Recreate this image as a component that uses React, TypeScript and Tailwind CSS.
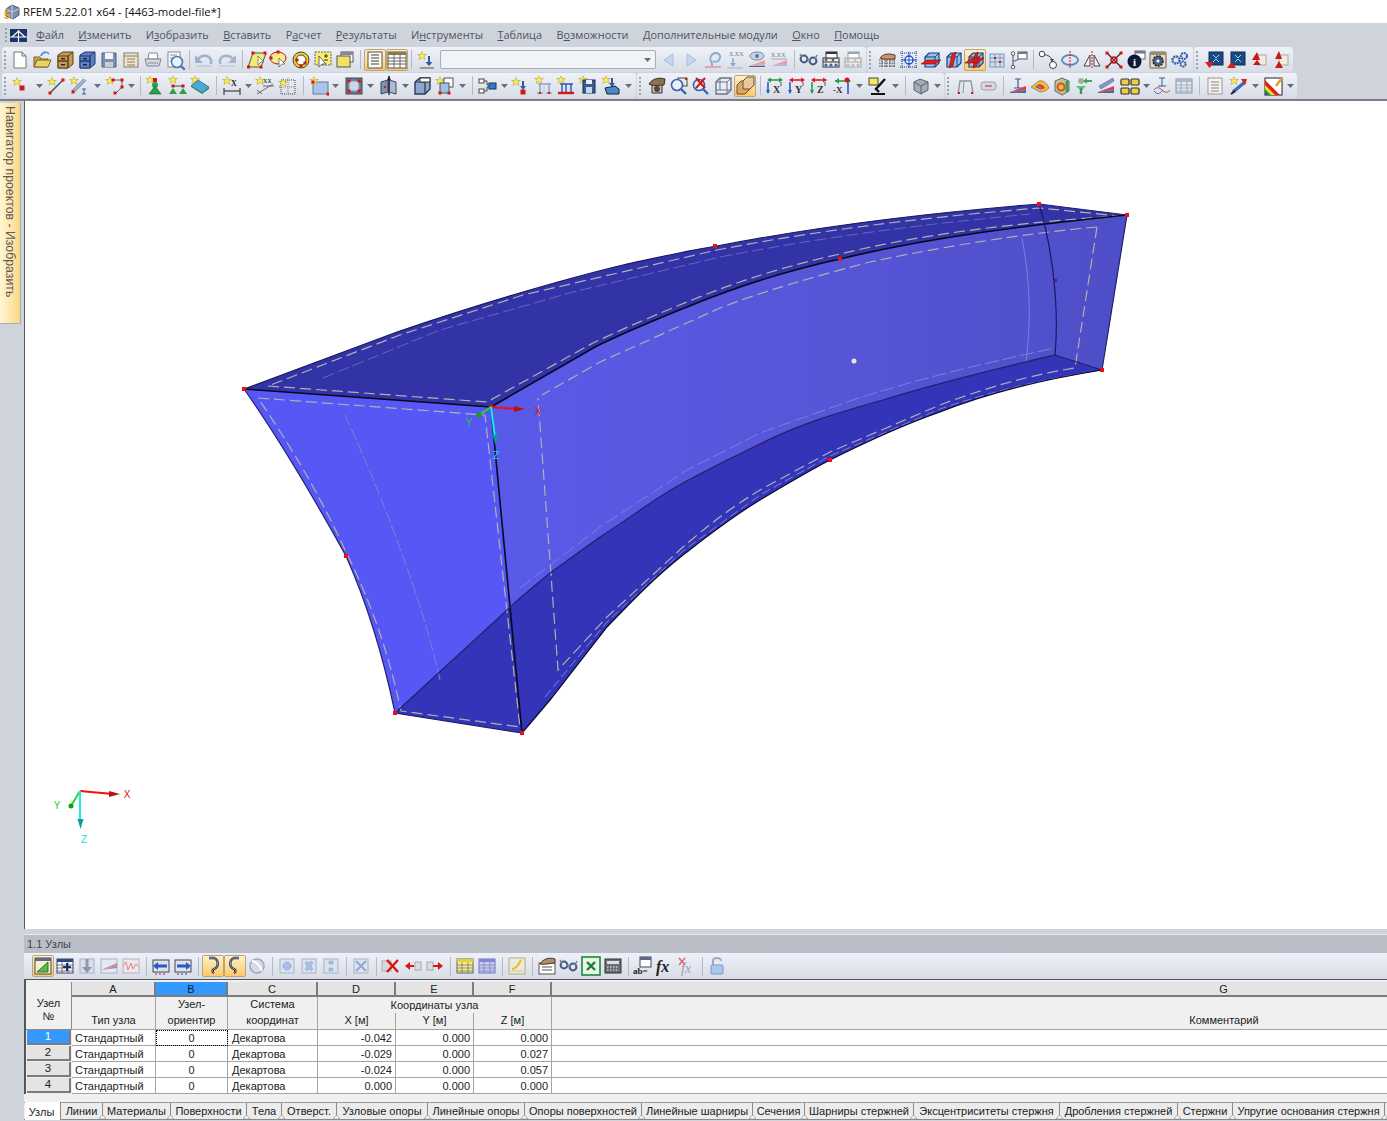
import type { ReactNode } from 'react'

// small pieces the toolbar icons are built from
const Star = ({ x = 5, y = 5 }: { x?: number; y?: number }) => (
  <path transform={`translate(${x} ${y})`} d="M0-4.5 1.2-1.4 4.4-1.6 2-.2 3 3.4 0 1.4-3 3.4-2-.2-4.4-1.6-1.2-1.4Z" fill="#fff04a" stroke="#a89a3a" strokeWidth=".5" />
)
const Node = ({ x, y, s = 3 }: { x: number; y: number; s?: number }) => <rect x={x - s / 2} y={y - s / 2} width={s} height={s} fill="#d81414" />
const Tx = ({ x, y, s = 6, c = '#444', t }: { x: number; y: number; s?: number; c?: string; t: string }) => (
  <text x={x} y={y} fontSize={s} fill={c} fontFamily="Liberation Serif, serif" fontWeight="700">{t}</text>
)
const P = ({ d, f = 'none', c = '#555', w = 1 }: { d: string; f?: string; c?: string; w?: number }) => <path d={d} fill={f} stroke={c} strokeWidth={w} />
const Mag = ({ x = 8, y = 8, c = '#4a78b8' }: { x?: number; y?: number; c?: string }) => (
  <g>
    <circle cx={x} cy={y} r="5.5" fill="#e8f0fa" stroke={c} strokeWidth="1.6" />
    <path d={`M${x + 4} ${y + 4}l5 5`} stroke={c} strokeWidth="2.4" />
  </g>
)
const Cab = ({ a, b }: { a: string; b: string }) => (
  <g>
    <P d="M3 5 8 2h10v12l-5 4H3Z" f={a} c={b} />
    <P d="M3 6h10v5H3ZM3 11h10v7H3Z" f={a} c={b} />
    <P d="M13 6l5-4M13 18V6" c={b} />
    <rect x="6" y="8" width="4" height="1.4" fill="#222" />
    <rect x="6" y="14" width="4" height="1.4" fill="#222" />
  </g>
)
const Abacus = ({ c, n }: { c: string; n: string }) => (
  <g>
    <rect x="2" y="8" width="16" height="9" fill="#f4f0d8" stroke={c} />
    <rect x="5" y="2" width="11" height="6" fill="#fff" stroke={c} />
    <rect x="5" y="2" width="11" height="2" fill={c} />
    <path d="M2 12h16" stroke={c} />
    <circle cx="5" cy="15" r="1.6" fill={n} /><circle cx="10" cy="15" r="1.6" fill={n} /><circle cx="15" cy="15" r="1.6" fill={n} />
    <circle cx="5" cy="10" r="1.4" fill={n} /><circle cx="12" cy="10" r="1.4" fill={n} />
  </g>
)
const Plane = ({ a }: { a: string }) => (
  <g>
    <P d="M4 7l4-4h10v10l-4 4H4Z" f="#92c2f0" c="#1c3f7c" w={1.2} />
    <P d="M4 7h10v10M14 7l4-4" c="#1c3f7c" />
    <P d={a} f="#e02020" c="#801010" w={.6} />
  </g>
)
const Wedge = ({ pale = false }: { pale?: boolean }) => (
  <g>
    <path d="M2 16 18 10v4Z" fill={pale ? '#e8a0a0' : '#e04040'} />
    <path d="M2 16 18 14v2Z" fill={pale ? '#a0b8e8' : '#3a6ad0'} />
    <path d="M2 16.5h16" stroke="#666" />
  </g>
)
const Ax = ({ t, a, b }: { t: string; a: string; b: string }) => (
  <g>
    <path d="M3 6v11" stroke={b} strokeWidth="1.6" />
    <path d="M1 14l2 4 2-4Z" fill={b} />
    <path d="M3 4h14" stroke={a} strokeWidth="1.6" />
    <path d="M14 1.5 18 4l-4 2.5ZM6 1.5 2 4l4 2.5Z" fill={a} />
    <path d="M16 6v4" stroke="#555" />
    <Tx x={8} y={17} s={10} c="#333" t={t} />
  </g>
)
const Tbl = ({ c, b, f = '#fff' }: { c: string; b: string; f?: string }) => (
  <g>
    <rect x="2" y="3" width="16" height="14" fill={f} stroke={c} />
    <rect x="2" y="3" width="16" height="3" fill={b} />
    <path d="M2 9h16M2 12h16M2 15h16M7 6v11M13 6v11" stroke={c} strokeWidth=".7" />
  </g>
)
const Curl = ({ flip = false }: { flip?: boolean }) => (
  <g transform={flip ? 'matrix(-1 0 0 1 20 0)' : undefined}>
    <P d="M6 2h5c5 2 5 9 0 11 -2 1-2 3 0 4" c="#223" w={2.4} />
    <P d="M6 2h5c5 2 5 9 0 11 -2 1-2 3 0 4" c="#8fb0d8" w={1} />
  </g>
)
const Pale = ({ d }: { d: string }) => (
  <g>
    <rect x="3" y="3" width="14" height="14" fill="#dde3ee" stroke="#a8b2c6" />
    <path d={d} fill="#a6c0e8" stroke="#8ea8d0" strokeWidth=".6" />
  </g>
)

const ICONS: Record<string, ReactNode> = {
  doc: <P d="M4 2h8l4 4v12H4ZM12 2v4h4" f="#fff" c="#777" />,
  open: <g><P d="M2 7h6l1 2h7v8H2Z" f="#c8a848" c="#7a6420" /><P d="M5 10h14l-3 7H2Z" f="#ecd068" c="#7a6420" /><P d="M9 6c1-4 6-5 8-2" c="#5a8ac8" w={1.6} /></g>,
  cabB: <Cab a="#c89a58" b="#5a3e18" />,
  cabU: <Cab a="#5a80c8" b="#22386a" />,
  save: <g><P d="M3 3h14v14H3Z" f="#7f8fb4" c="#50607e" /><rect x="6" y="3" width="8" height="6" fill="#f4f4f4" /><rect x="6" y="12" width="8" height="5" fill="#c8ccd6" /></g>,
  notes: <g><rect x="3" y="3" width="14" height="14" fill="#efe4cc" stroke="#8a7c60" /><path d="M3 6h14M6 9h8M6 12h8M6 15h8" stroke="#8a7c60" /></g>,
  print: <g><P d="M6 3h8l1 6H5Z" f="#fff" c="#888" /><P d="M2 9h16l-2 7H4Z" f="#d4d8e0" c="#7e8694" /><path d="M5 13h10" stroke="#8890a0" /></g>,
  prev: <g><rect x="3" y="2" width="12" height="15" fill="#fff" stroke="#888" /><path d="M5 5h7M5 8h4M5 11h3" stroke="#889" /><Mag x={12} y={12} /></g>,
  undo: <g><P d="M4 9c4-5 11-4 13 1v4" c="#9cb0d0" w={2.6} /><path d="M1 5v8h8Z" fill="#9cb0d0" /><path d="M2 16h16" stroke="#b0bccf" /></g>,
  redo: <g><P d="M16 9c-4-5-11-4-13 1v4" c="#a6b4cc" w={2.6} /><path d="M19 5v8h-8Z" fill="#a6b4cc" /><path d="M2 16h16" stroke="#b8c2d2" /></g>,
  para: <g><P d="M6 3h13l-5 14H1Z" f="#f4ec70" c="#555" /><Node x={6} y={3} /><Node x={1.5} y={17} /><Node x={14} y={17} /><Node x={18} y={3} /><P d="M11 6v9l3-3 3 0Z" f="#fff" c="#555" w={.7} /></g>,
  zoomc: <g><ellipse cx="9" cy="8" rx="8" ry="6" fill="#f6ec8c" stroke="#a02020" /><Node x={2} y={8} /><Node x={9} y={2} /><P d="M10 8v9l3-3h3Z" f="#fff" c="#555" w={.7} /></g>,
  ring: <g><circle cx="10" cy="10" r="8" fill="#f0d020" stroke="#444" /><circle cx="10" cy="10" r="5" fill="#fff" stroke="#444" /><Node x={6} y={10} /><Node x={10} y={16} /><Node x={14} y={13} /></g>,
  boxcur: <g><rect x="2" y="2" width="16" height="13" fill="#f6ec70" stroke="#666" strokeDasharray="2 1" /><path d="M11 6h4M13 4v4M11 10h4" stroke="#333" /><P d="M6 6v11l3-3h4Z" f="#fff" c="#444" w={.8} /></g>,
  wins: <g><rect x="6" y="2" width="12" height="10" fill="#fff" stroke="#555" /><rect x="6" y="2" width="12" height="3" fill="#889" /><rect x="2" y="6" width="13" height="11" fill="#f6e060" stroke="#555" /></g>,
  list: <g><rect x="3" y="2" width="14" height="16" fill="#fbfaf2" stroke="#555" /><path d="M6 5h8M6 8h8M6 11h8M6 14h8" stroke="#444" /></g>,
  grid: <g><rect x="1" y="2" width="18" height="16" fill="#fff" stroke="#555" /><rect x="1" y="2" width="18" height="3" fill="#8a7a50" /><path d="M1 8h18M1 11h18M1 14h18M7 5v13M13 5v13" stroke="#666" /></g>,
  starDown: <g><Star x={6} y={6} /><path d="M13 6v8" stroke="#2a5aa8" strokeWidth="2" /><path d="M9.5 12h7L13 16Z" fill="#2a5aa8" /><path d="M4 18h14" stroke="#555" /></g>,
  navL: <path d="M14 4v12L5 10Z" fill="#c8d6f0" stroke="#a8bce0" />,
  navR: <path d="M6 4v12l9-6Z" fill="#c8d6f0" stroke="#a8bce0" />,
  pin: <g><P d="M9 13c-4-5 0-10 4-10s6 5 2 8c-2 1-4 1-5 0" c="#8eaad4" w={1.8} /><path d="M9 13v3" stroke="#8eaad4" strokeWidth="2" /><path d="M2 17h16" stroke="#e09090" strokeWidth="1.4" /></g>,
  xxDown: <g><Tx x={4} y={6} s={6} c="#8a94a6" t="X.XX" /><path d="M8 8v8" stroke="#8eaad4" strokeWidth="1.6" /><path d="M5 13l3 4 3-4Z" fill="#8eaad4" /><path d="M2 18h16" stroke="#a8b0c0" /></g>,
  eye: <g><ellipse cx="10" cy="6" rx="7" ry="4" fill="#c8d4e8" stroke="#7a8aa6" /><circle cx="10" cy="6" r="2" fill="#5a7ab0" /><Wedge pale /></g>,
  xxLine: <g><Tx x={2} y={7} s={6} c="#8a94a6" t="X.XX" /><path d="M2 16 18 10v4Z" fill="#e8a0a0" /><path d="M2 16 18 14v2Z" fill="#a0b8e8" /><path d="M2 9h16" stroke="#a0a8b6" /></g>,
  chain: <g><circle cx="5" cy="9" r="3.4" fill="none" stroke="#445a78" strokeWidth="2" /><circle cx="14" cy="11" r="3.4" fill="none" stroke="#445a78" strokeWidth="2" /><path d="M8 9l3 1M1 4l2 3M18 5l-2 4" stroke="#6a8ab0" strokeWidth="1.6" /></g>,
  abacus: <Abacus c="#333" n="#3a66b8" />,
  abacusP: <Abacus c="#9aa4b8" n="#b8bccc" />,
  handGrid: <g><path d="M2 10h16M2 13h16M2 16h16M5 8v10M9 8v10M13 8v10M17 8v10" stroke="#444" strokeDasharray="1.5 1" /><P d="M3 8c3-4 8-5 15-3v4c-5 0-10 1-15-1Z" f="#c4946c" c="#5a3c20" /></g>,
  crossGrid: <g><path d="M1 3h18M1 17h18M3 1v18M17 1v18" stroke="#2a3a6a" strokeDasharray="1 1" /><circle cx="10" cy="10" r="4" fill="#fff" stroke="#1a4ac8" strokeWidth="1.4" /><path d="M10 2v16M2 10h16" stroke="#1a4ac8" /></g>,
  planeA: <Plane a="M0 14l6-4h14l-6 4Z" />,
  planeB: <Plane a="M6 18l3-14 4-2-3 14Z" />,
  planeC: <Plane a="M0 13l7-5h12l-6 5ZM8 18l2-14 3-2-1 14Z" />,
  gridN: <g><rect x="3" y="4" width="14" height="13" fill="#d4e0f0" stroke="#7a96bc" /><path d="M3 8h14M3 12h14M8 4v13M13 4v13" stroke="#7a96bc" /><Node x={8} y={8} s={2} /><Node x={13} y={12} s={2} /></g>,
  branch: <g><rect x="9" y="2" width="9" height="7" fill="#fff" stroke="#555" /><rect x="9" y="2" width="9" height="2" fill="#778" /><path d="M4 4v13M4 11c4 0 5-2 6-2" stroke="#6a7a98" strokeWidth="1.4" fill="none" /><circle cx="4" cy="3.5" r="1.8" fill="#fff" stroke="#555" /><circle cx="4" cy="17" r="1.8" fill="#fff" stroke="#555" /></g>,
  circles: <g><circle cx="4" cy="4" r="2.8" fill="#fff" stroke="#444" /><circle cx="15" cy="15" r="3.5" fill="#fff" stroke="#444" /><path d="M7 5c4 0 7 3 7 6" stroke="#444" fill="none" /><path d="M12 9l2 3 2-3Z" fill="#444" /></g>,
  rot: <g><ellipse cx="10" cy="10" rx="8" ry="5" fill="none" stroke="#5a84c0" strokeWidth="1.8" /><path d="M10 1v18" stroke="#d81414" strokeDasharray="2 1" /></g>,
  mirror: <g><P d="M8 5v11H2Z" f="#f2f2f2" c="#444" /><P d="M12 5v11h6Z" f="#f2f2f2" c="#444" /><path d="M10 1v18" stroke="#d81414" strokeDasharray="2 1" /></g>,
  redX: <g><path d="M3 3l14 14M17 3 3 17" stroke="#222" strokeWidth="1.2" /><circle cx="10" cy="10" r="3" fill="none" stroke="#c81010" strokeWidth="1.4" /><Node x={3} y={3} /><Node x={17} y={3} /><Node x={3} y={17} /><Node x={17} y={17} /><Node x={10} y={10} s={2} /></g>,
  info: <g><rect x="9" y="1" width="10" height="8" fill="#fff" stroke="#666" /><rect x="9" y="1" width="10" height="2.5" fill="#778" /><circle cx="8.5" cy="11.5" r="7" fill="#0c1a3a" /><text x="7" y="16" fontSize="11" fontWeight="700" fill="#fff" fontFamily="Liberation Serif, serif">i</text></g>,
  gear: <g><rect x="2" y="2" width="16" height="16" rx="1" fill="#e8dcc0" stroke="#6a6048" /><rect x="2" y="2" width="16" height="3" fill="#998c70" /><circle cx="10" cy="11" r="5" fill="#4a6088" stroke="#222" strokeDasharray="2 1" strokeWidth="1.5" /><circle cx="10" cy="11" r="1.6" fill="#fff" /></g>,
  gears: <g><circle cx="6" cy="10" r="3.5" fill="none" stroke="#3a64a8" strokeWidth="2.4" strokeDasharray="2 .7" /><circle cx="14" cy="6" r="3" fill="none" stroke="#3a64a8" strokeWidth="2.2" strokeDasharray="2 .7" /><circle cx="13" cy="14" r="2.6" fill="none" stroke="#3a64a8" strokeWidth="2" strokeDasharray="2 .7" /></g>,
  boxDn: <g><rect x="5" y="2" width="14" height="13" fill="#1a4a84" stroke="#0c2a52" /><path d="M9 5l3 3 3-3M9 12l3-3 3 3" stroke="#a8d0f0" fill="none" /><path d="M1 12h9l-4.5 6Z" fill="#d81c1c" /></g>,
  boxUp: <g><rect x="5" y="2" width="14" height="13" fill="#1a4a84" stroke="#0c2a52" /><path d="M9 5l3 3 3-3M9 12l3-3 3 3" stroke="#a8d0f0" fill="none" /><path d="M1 18h9L5.5 12Z" fill="#d81c1c" /></g>,
  triA: <g><rect x="9" y="5" width="9" height="10" fill="#f0ece0" stroke="#aaa" /><path d="M9 2 4 10h8ZM9 10l-4 5h8Z" fill="#c81818" /></g>,
  triB: <g><rect x="9" y="5" width="9" height="10" fill="#f0ece0" stroke="#aaa" /><path d="M9 1 5 9h7ZM5 18h8l-4-7Z" fill="#c81818" /></g>,
  dot: <g><Star x={7} y={6} /><Node x={12} y={12} s={5} /></g>,
  line: <g><Star x={6} y={6} /><path d="M4 17 17 4" stroke="#444" strokeWidth="1.2" /><Node x={4} y={17} /><Node x={17} y={4} /></g>,
  lineI: <g><Star x={5} y={5} /><path d="M3 15 15 3M5 16 17 4" stroke="#8a9ab4" strokeWidth="1.6" /><Node x={4} y={16} /><path d="M13 13h4M15 13v5M13 18h4" stroke="#3a64a8" /></g>,
  poly: <g><Star x={5} y={5} /><path d="M8 4h9v7l-6 6" stroke="#666" fill="none" /><Node x={8} y={4} /><Node x={17} y={4} /><Node x={17} y={11} /><Node x={10} y={17} /></g>,
  supP: <g><Star x={5} y={4} /><Node x={10} y={4} s={4} /><circle cx="10" cy="9" r="3" fill="#2aa04a" /><P d="M10 10 4 18h12Z" f="#2aa04a" c="#14602a" w={.6} /></g>,
  supL: <g><Star x={5} y={4} /><Node x={5} y={10} /><Node x={15} y={10} /><path d="M5 10h10" stroke="#444" /><path d="M5 12 1 18h8ZM15 12l-4 6h8Z" fill="#2aa04a" /></g>,
  supS: <g><Star x={5} y={4} /><path d="M1 10 8 4l11 7-7 6Z" fill="#4aa8d8" stroke="#335" strokeWidth=".6" /><path d="M1 10l11 7 7-6v2l-7 5-11-7Z" fill="#2a9a4a" /></g>,
  dimX: <g><Star x={5} y={5} /><path d="M2 12v7M18 12v7M2 15h16" stroke="#222" /><Tx x={9} y={10} s={8} c="#222" t="X" /></g>,
  dimXX: <g><Star x={5} y={5} /><path d="M2 18 18 8" stroke="#666" /><path d="M2 14l5 4" stroke="#666" /><Tx x={8} y={7} s={6} c="#444" t="XX" /><path d="M8 10h11" stroke="#666" /></g>,
  dotBox: <g><rect x="4" y="4" width="14" height="14" fill="none" stroke="#444" strokeDasharray="1 1" /><Star x={6} y={7} /><path d="M11 2v16M2 11h16" stroke="#888" strokeDasharray="1 1" /></g>,
  surf: <g><rect x="4" y="6" width="15" height="12" fill="#a8c4e8" stroke="#6a7a98" /><Star x={5} y={5} /><Node x={4} y={6} /><Node x={19} y={18} /></g>,
  frame: <g><rect x="2" y="2" width="16" height="16" fill="#6a7a94" stroke="#444" /><rect x="5" y="5" width="10" height="10" fill="#c8d8ec" stroke="#8090a8" /><Node x={5} y={5} /><Node x={15} y={5} /><Node x={5} y={15} /><Node x={15} y={15} /></g>,
  planes: <g><P d="M2 6l7-2v12l-7 2Z" f="#7a94b8" c="#445" /><P d="M10 4l7 2v12l-7-2Z" f="#a8bcd8" c="#445" /><path d="M10 0v19" stroke="#223" strokeWidth="1.4" /><path d="M8 4l2-4 2 4Z" fill="#223" /><Node x={6} y={11} s={2} /></g>,
  cube: <g><P d="M3 6l5-4h10v11l-5 5H3Z" f="#8ea8cc" c="#2a3a5c" w={1.4} /><P d="M3 6h10v12" c="#2a3a5c" w={1.2} /><P d="M8 2h10v4H8Z" f="#fff" c="#333" /></g>,
  cubes: <g><Star x={5} y={5} /><rect x="9" y="2" width="9" height="9" fill="#fff" stroke="#555" /><rect x="5" y="7" width="9" height="10" fill="#9cc0e8" stroke="#555" /><Node x={5} y={17} /><Node x={14} y={17} /></g>,
  conn: <g><rect x="1" y="3" width="5" height="4" fill="#fff" stroke="#444" /><rect x="1" y="13" width="5" height="4" fill="#fff" stroke="#444" /><rect x="11" y="7" width="7" height="6" fill="#2a7ad8" stroke="#234" /><path d="M6 5h3v4h2M6 15h3v-4h2" stroke="#444" fill="none" /></g>,
  starRed: <g><Star x={6} y={6} /><path d="M13 5v7" stroke="#2a5aa8" strokeWidth="2" /><path d="M10 10h6l-3 4Z" fill="#2a5aa8" /><Node x={13} y={16} s={5} /></g>,
  frameP: <g><Star x={5} y={4} /><path d="M4 8h13M6 8v9M15 8v9M3 17h6M12 17h6" stroke="#8aa0c4" strokeWidth="1.4" /><path d="M10 8v9" stroke="#b8c8e0" /><Node x={6} y={17} s={2} /><Node x={15} y={17} s={2} /></g>,
  frameR: <g><Star x={5} y={4} /><path d="M4 8h13M6 8v9M15 8v9M10 8v9" stroke="#2a5aa8" strokeWidth="1.4" /><path d="M2 17h16" stroke="#d81414" strokeWidth="2.4" /></g>,
  disk: <g><Star x={5} y={4} /><rect x="5" y="4" width="12" height="13" fill="#3a5a94" stroke="#18284a" /><rect x="8" y="4" width="6" height="4" fill="#e8eef8" /><rect x="8" y="11" width="6" height="6" fill="#c8d8ec" /></g>,
  kit: <g><Star x={5} y={4} /><path d="M11 2v7" stroke="#2a5aa8" strokeWidth="2" /><path d="M8 7h6l-3 4Z" fill="#2a5aa8" /><P d="M4 12l10-2 4 3v5H6Z" f="#4a8ac8" c="#223" /></g>,
  handCube: <g><P d="M5 7h10v10H5Z" f="#c8c4b4" c="#333" /><P d="M2 8c3-5 9-7 16-5l-1 6c-5 0-9 2-15-1Z" f="#8c7050" c="#3a2c18" /><circle cx="10" cy="13" r="3" fill="#50483a" /></g>,
  zoomSel: <g><rect x="9" y="2" width="9" height="8" fill="none" stroke="#444" /><Node x={17} y={3} s={2} /><Mag x={8} y={9} c="#3a64a8" /></g>,
  zoomX: <g><Mag x={8} y={9} c="#3a64a8" /><path d="M5 2l9 10M14 2 5 12" stroke="#d81414" strokeWidth="2" /></g>,
  wire: <g><P d="M3 6l4-4h11v12l-4 4H3Z" f="#e8ecf4" c="#6a7484" w={1.4} /><P d="M3 6h11v12M14 6l4-4M7 2v12H3M7 14h11" c="#6a7484" /></g>,
  solid: <g><P d="M2 9l4-4h8v9l-4 4H2Z" f="#d8a860" c="#6a5030" /><P d="M8 5l4-4h7v8l-4 4H8Z" f="#e8c898" c="#6a5030" /></g>,
  axX: <Ax t="X" a="#22a048" b="#2a5ac8" />,
  axY: <Ax t="Y" a="#d82020" b="#2a5ac8" />,
  axZ: <Ax t="Z" a="#d82020" b="#22a048" />,
  axMX: <g><path d="M2 5h15" stroke="#22a048" strokeWidth="1.6" /><path d="M14 2l4 3-4 3ZM6 2 2 5l4 3Z" fill="#22a048" /><circle cx="14" cy="4" r="2.5" fill="#d81414" /><path d="M15 7v11" stroke="#2a5ac8" strokeWidth="1.6" /><Tx x={0} y={17} s={9} c="#333" t="-X" /></g>,
  micro: <g><rect x="1" y="2" width="9" height="7" fill="#f4e860" stroke="#444" /><path d="M17 3 8 13l3 3" stroke="#111" strokeWidth="2.4" fill="none" /><path d="M3 18h14" stroke="#111" strokeWidth="2" /></g>,
  block: <g><P d="M3 6l6-3 8 3v8l-7 4-7-4Z" f="#a4acb8" c="#5a6270" /><P d="M3 6l7 4 7-4M10 10v8" c="#5a6270" /></g>,
  ptl: <g><path d="M2 18l2-13h11l2 13" stroke="#8c96a6" strokeWidth="1.4" fill="none" /><path d="M8 5l-1 12" stroke="#8c96a6" /><Node x={3} y={17} s={2} /><Node x={16} y={17} s={2} /></g>,
  pill: <g><rect x="3" y="6" width="15" height="8" rx="3" fill="#d4d8e0" stroke="#9aa2b0" /><path d="M7 10h7" stroke="#c88080" strokeWidth="2" /></g>,
  loadI: <g><path d="M7 3h6M10 3v9M6 12h8" stroke="#3a5a94" strokeWidth="1.2" /><Wedge /></g>,
  disc: <g><path d="M1 11 9 5c4-1 8 2 10 7-3 3-6 4-9 4Z" fill="#f4c030" stroke="#557" strokeWidth=".6" /><path d="M5 11l4-3c2 0 5 2 6 4-2 1-4 2-6 1Z" fill="#e04030" /><path d="M7 11l2-1 3 2-3 1Z" fill="#4a8ad8" /></g>,
  cubeC: <g><P d="M3 5l7-3 7 3v10l-7 4-7-4Z" f="#b8c890" c="#667" /><circle cx="9" cy="11" r="4.5" fill="#e05030" /><circle cx="9" cy="11" r="2.5" fill="#f0c030" /><path d="M15 5v11" stroke="#38a050" strokeWidth="3" /></g>,
  greenUp: <g><circle cx="7" cy="5" r="3" fill="#9ab8a0" /><path d="M10 5h8" stroke="#4aa060" strokeWidth="2" /><path d="M13 2 9 5l4 3Z" fill="#4aa060" /><path d="M2 10h10l-5 5Z" fill="#6ab880" /><path d="M7 12v6" stroke="#3a9a50" strokeWidth="2.4" /></g>,
  wedgeB: <g><path d="M3 10 17 2l1 3-13 8Z" fill="#7a9cd0" stroke="#557" strokeWidth=".5" /><Wedge /></g>,
  blocks: <g><rect x="1" y="3" width="8" height="6" rx="1" fill="#f0d040" stroke="#333" strokeWidth="1.2" /><rect x="11" y="3" width="8" height="6" rx="1" fill="#f0d040" stroke="#333" strokeWidth="1.2" /><rect x="1" y="12" width="8" height="6" rx="1" fill="#f0d040" stroke="#333" strokeWidth="1.2" /><rect x="11" y="12" width="8" height="6" rx="1" fill="#f0d040" stroke="#333" strokeWidth="1.2" /></g>,
  wave: <g><path d="M7 2h6M10 2v8M6 10h8" stroke="#3a5a94" /><path d="M2 14c2-3 5-3 8 0s6 3 8 0" stroke="#c04040" fill="none" /><path d="M2 15c3 4 6 3 8 0" stroke="#3a6ad0" fill="none" /></g>,
  panel: <Tbl c="#8a94a6" b="#a8b4c8" f="#e4e8f0" />,
  repDoc: <g><rect x="3" y="2" width="14" height="16" fill="#f4f2ea" stroke="#999" /><path d="M6 6h8M6 9h8M6 12h8M6 15h8" stroke="#888" /></g>,
  rocket: <g><Star x={5} y={5} /><path d="M4 16 16 6" stroke="#3a6ab0" strokeWidth="3.4" /><path d="M12 3l6 0-2 6Z" fill="#d82020" /><path d="M2 18l4-3" stroke="#222" strokeWidth="2" /></g>,
  rainbow: <g><rect x="1" y="2" width="17" height="17" fill="#fff" stroke="#222" /><path d="M1 4 16 19H1Z" fill="#e02020" /><path d="M1 9 11 19H1Z" fill="#f0e020" /><path d="M1 13l6 6H1Z" fill="#20a030" /><path d="M1 16l3 3H1Z" fill="#2040d0" /><path d="M12 10 18 2" stroke="#e0a020" strokeWidth="2.4" /></g>,
  tri: <g><rect x="2" y="2" width="16" height="16" fill="#f4f0d0" stroke="#444" /><rect x="2" y="2" width="16" height="3" fill="#5a6a8a" /><P d="M4 16 15 6v10Z" f="#58b848" c="#2a7a20" /></g>,
  tblPlus: <g><Tbl c="#445" b="#2a4a84" /><path d="M8 11h8M12 7v8" stroke="#18306a" strokeWidth="2" /></g>,
  downP: <g><rect x="3" y="3" width="14" height="14" fill="#d8deea" stroke="#a8b2c6" /><path d="M10 3v9" stroke="#8a98b0" strokeWidth="3" /><path d="M5 11h10l-5 6Z" fill="#8a98b0" /></g>,
  wedgeT: <g><rect x="2" y="3" width="16" height="14" fill="#e4e8f0" stroke="#a8b2c6" /><path d="M2 14 18 7v3Z" fill="#e08080" /><path d="M2 14 18 10v2Z" fill="#8098d8" /></g>,
  waveT: <g><rect x="2" y="3" width="16" height="14" fill="#ece8ea" stroke="#b8b2c0" /><path d="M2 10l3-4 2 8 3-7 2 6 3-5 3 3" stroke="#e08888" fill="none" /></g>,
  tblL: <g><rect x="2" y="4" width="16" height="12" fill="#dde2ec" stroke="#445" /><path d="M4 10h12" stroke="#2a5ac8" strokeWidth="3" /><path d="M7 6l-5 4 5 4Z" fill="#2a5ac8" /><path d="M4 18h2M8 18h2M12 18h2" stroke="#445" /></g>,
  tblR: <g><rect x="2" y="4" width="16" height="12" fill="#dde2ec" stroke="#445" /><path d="M4 10h12" stroke="#2a5ac8" strokeWidth="3" /><path d="M13 6l5 4-5 4Z" fill="#2a5ac8" /><path d="M4 18h2M8 18h2M12 18h2" stroke="#445" /></g>,
  curlA: <Curl />,
  curlB: <Curl flip />,
  globe: <g><circle cx="10" cy="10" r="7" fill="#d4dae6" stroke="#a0aabc" strokeWidth="1.6" /><path d="M5 5c5 1 8 4 10 10" stroke="#fff" strokeWidth="2" fill="none" /></g>,
  plusP: <Pale d="M8 6h4v2h2v4h-2v2H8v-2H6V8h2Z" />,
  crossP: <Pale d="M6 7l2-2 2 2 2-2 2 2-2 3 2 3-2 2-2-2-2 2-2-2 2-3Z" />,
  dotsP: <Pale d="M8 5h4v3H8ZM8 12h4v3H8Z" />,
  xBoxP: <g><rect x="3" y="3" width="14" height="14" fill="#dde3ee" stroke="#a8b2c6" /><path d="M5 5l10 10M15 5 5 15" stroke="#8ea8d0" strokeWidth="2" /></g>,
  delRow: <g><rect x="1" y="5" width="9" height="10" fill="#d4d8e0" stroke="#aaa" /><path d="M6 4l11 12M17 4 6 16" stroke="#d81414" strokeWidth="2.4" /></g>,
  arrL: <g><rect x="12" y="6" width="6" height="8" fill="#d8dce4" stroke="#aaa" /><path d="M3 10h8" stroke="#d81414" strokeWidth="2" /><path d="M7 6l-5 4 5 4Z" fill="#d81414" /></g>,
  arrR: <g><rect x="2" y="6" width="6" height="8" fill="#d8dce4" stroke="#aaa" /><path d="M8 10h8" stroke="#d81414" strokeWidth="2" /><path d="M13 6l5 4-5 4Z" fill="#d81414" /></g>,
  yTbl: <Tbl c="#666" b="#e8d030" f="#f8ee90" />,
  bTbl: <Tbl c="#7078c0" b="#8088d0" f="#c8ccf0" />,
  yDoc: <g><rect x="2" y="2" width="16" height="16" fill="#ecead8" stroke="#b0ac90" /><path d="M5 13c3 0 6-3 9-9" stroke="#e0c030" strokeWidth="2" fill="none" /><path d="M4 15h12" stroke="#c8c4a8" /></g>,
  handTbl: <g><rect x="2" y="7" width="16" height="11" fill="#fff" stroke="#555" /><path d="M5 11h10M5 14h10" stroke="#555" /><P d="M3 8c3-5 9-7 15-5v4c-5 0-9 2-15 1Z" f="#b08c68" c="#4a3420" /></g>,
  excel: <g><rect x="1" y="1" width="18" height="18" fill="#e8f4e8" stroke="#1a8a3a" strokeWidth="1.6" /><path d="M6 6l8 8M14 6l-8 8" stroke="#1a7a34" strokeWidth="2.4" /></g>,
  calc: <g><rect x="2" y="3" width="16" height="14" fill="#6a6e76" stroke="#333" /><rect x="4" y="5" width="12" height="3" fill="#dde" /><path d="M4 11h12M4 14h12" stroke="#eee" strokeDasharray="1.5 1.5" /></g>,
  abEq: <g><rect x="7" y="1" width="11" height="10" fill="#fff" stroke="#445" /><rect x="7" y="1" width="11" height="3" fill="#5a6a8a" /><Tx x={0} y={18} s={9} c="#222" t="ab=" /></g>,
  fx: <text x="1" y="16" fontSize="16" fontStyle="italic" fontWeight="700" fill="#222" fontFamily="Liberation Serif, serif">fx</text>,
  fxX: <g><text x="4" y="17" fontSize="14" fontStyle="italic" fill="#a0a0ac" fontFamily="Liberation Serif, serif">fx</text><path d="M2 2l6 7M8 2 2 9" stroke="#e06060" strokeWidth="1.4" /></g>,
  lock: <g><P d="M6 9V5c0-4 8-4 8 0" c="#a0aabc" w={2} /><rect x="4" y="9" width="12" height="9" rx="1" fill="#a8c8f0" stroke="#7a98c4" /></g>,
}

const BLANK: Record<number, string> = { 1: 'w-px', 2: 'w-[2px]', 3: 'w-[3px]', 7: 'w-[7px]' }
const SEP: Record<string, string> = { '|7': 'w-[7px]', '|8': 'w-[8px]', '|9': 'w-[9px]', '|10': 'w-[10px]' }
const GRIP: Record<string, string> = { g7: 'w-[7px]', g9: 'w-[9px]', g10: 'w-[10px]' }

function Tool({ tok }: { tok: string | number }) {
  if (typeof tok === 'number') return <div className={`shrink-0 ${BLANK[tok]}`} />
  if (tok in SEP) {
    return (
      <div className={`flex h-full shrink-0 items-center justify-center ${SEP[tok]}`}>
        <div className="h-[19px] w-px bg-[#b4bac6]" />
      </div>
    )
  }
  if (tok in GRIP) {
    return (
      <div className={`flex h-full shrink-0 flex-col justify-center gap-[2px] pl-[2px] ${GRIP[tok]}`}>
        <div className="size-[2px] bg-[#9aa0ac]" />
        <div className="size-[2px] bg-[#9aa0ac]" />
        <div className="size-[2px] bg-[#9aa0ac]" />
        <div className="size-[2px] bg-[#9aa0ac]" />
        <div className="size-[2px] bg-[#9aa0ac]" />
      </div>
    )
  }
  if (tok === 'v') {
    return (
      <div className="flex h-full w-[10px] shrink-0 items-center justify-center">
        <svg width="7" height="4"><path d="M0 0h7L3.5 4Z" fill="#6a6e78" /></svg>
      </div>
    )
  }
  if (tok === 'combo') {
    return (
      <div className="flex h-[19px] w-[216px] shrink-0 items-center justify-end rounded-[2px] border border-[#a8acb4] bg-[#f2f3f6] pr-[4px]">
        <svg width="7" height="4"><path d="M0 0h7L3.5 4Z" fill="#6a6e78" /></svg>
      </div>
    )
  }
  const active = tok.endsWith('*')
  const name = active ? tok.slice(0, -1) : tok
  return (
    <div className={`flex size-[22px] shrink-0 items-center justify-center rounded-[2px] ${active ? 'border border-[#b9a77c] bg-linear-to-b from-[#fff0c4] to-[#ffc868]' : ''}`}>
      <svg width="20" height="20" viewBox="0 0 20 20" className="shrink-0">{ICONS[name]}</svg>
    </div>
  )
}

function Band({ toks }: { toks: (string | number)[] }) {
  return (
    <div className="flex h-[25px] items-center rounded-[3px] bg-linear-to-b from-[#eff2f8] to-[#d8dce6]">
      {toks.map((t, i) => <Tool key={i} tok={t} />)}
    </div>
  )
}

const ROW1A = ['g7', 'doc', 'open', 1, 'cabB', 'cabU', 'save', 'notes', 'print', 'prev', '|7', 'undo', 1, 'redo', '|8', 'para', 'zoomc', 'ring', 'boxcur', 'wins', '|8', 'list*', 'grid*', '|7', 'starDown', 3, 'combo', 2, 'navL', 'navR', 'pin', 'xxDown', 'eye', 'xxLine', '|8', 'chain', 'abacus', 'abacusP', 2]
const ROW1B = ['g9', 'handGrid', 'crossGrid', 'planeA', 'planeB', 'planeC*', 'gridN', 'branch', '|7', 'circles', 'rot', 'mirror', 'redX', 'info', 'gear', 'gears', 2]
const ROW1C = ['g9', 'boxDn', 'boxUp', 'triA', 'triB', 2]
const ROW2A = ['g7', 'dot', 3, 'v', 1, 'line', 1, 'lineI', 2, 'v', 2, 'poly', 'v', '|8', 'supP', 1, 'supL', 'supS', '|10', 'dimX', 'v', 1, 'dimXX', 'dotBox', '|10', 'surf', 'v', 3, 'frame', 'v', 3, 'planes', 'v', 1, 'cube', 1, 'cubes', 1, 'v', '|10', 'conn', 'v', 'starRed', 2, 'frameP', 'frameR', 'disk', 1, 'kit', 1, 'v', 3]
const ROW2B = ['g9', 'handCube', 'zoomSel', 'zoomX', 'wire', 'solid*', '|8', 'axX', 'axY', 'axZ', 2, 'axMX', 'v', 3, 'micro', 1, 'v', '|10', 'block', 'v', 2]
const ROW2C = ['g10', 'ptl', 'pill', '|8', 'loadI', 'disc', 'cubeC', 'greenUp', 'wedgeB', 2, 'blocks', 'v', 'wave', 'panel', '|9', 'repDoc', 2, 'rocket', 'v', 3, 'rainbow', 'v', 2]
const ROW3 = [7, 1, 'tri*', 'tblPlus', 'downP', 'wedgeT', 'waveT', '|8', 'tblL', 'tblR', '|8', 'curlA*', 'curlB*', 'globe', '|8', 'plusP', 'crossP', 'dotsP', '|8', 'xBoxP', '|8', 'delRow', 'arrL', 'arrR', '|8', 'yTbl', 'bTbl', '|8', 'yDoc', '|8', 'handTbl', 'chain', 'excel', 'calc', '|8', 'abEq', 'fx', 'fxX', '|8', 'lock']

const MENU: [string, string, string][] = [
  ['', 'Ф', 'айл'], ['', 'И', 'зменить'], ['И', 'з', 'образить'], ['', 'В', 'ставить'], ['Р', 'а', 'счет'], ['', 'Р', 'езультаты'],
  ['И', 'н', 'струменты'], ['', 'Т', 'аблица'], ['В', 'о', 'зможности'], ['', 'Д', 'ополнительные модули'], ['', 'О', 'кно'], ['', 'П', 'омощь'],
]

const TABS = [
  ['Линии', 'w-[42px]'], ['Материалы', 'w-[68px]'], ['Поверхности', 'w-[76px]'], ['Тела', 'w-[35px]'], ['Отверст.', 'w-[55px]'], ['Узловые опоры', 'w-[91px]'],
  ['Линейные опоры', 'w-[97px]'], ['Опоры поверхностей', 'w-[117px]'], ['Линейные шарниры', 'w-[111px]'], ['Сечения', 'w-[52px]'], ['Шарниры стержней', 'w-[109px]'],
  ['Эксцентриситеты стержня', 'w-[146px]'], ['Дробления стержней', 'w-[118px]'], ['Стержни', 'w-[55px]'], ['Упругие основания стержня', 'w-[152px]'],
]

const NODES = [
  ['-0.042', '0.000', '0.000'],
  ['-0.029', '0.000', '0.027'],
  ['-0.024', '0.000', '0.057'],
  ['0.000', '0.000', '0.000'],
]

const headCell = 'flex items-end justify-center border-r border-b border-[#a4a4a4] bg-[#f0f0f0] pb-[3px] text-[#222]'
const letterCell = 'flex items-center justify-center border-r-2 border-b-2 border-[#7c7c7c] bg-[#e4e4e4] pt-[2px] text-[#222]'
const cell = 'flex items-center border-r border-b border-[#a4a4a4] bg-white pt-[1px] text-[#222]'

function Axes({ ox, oy, xe, ye, ze, xl, yl, zl }: { ox: number; oy: number; xe: number[]; ye: number[]; ze: number[]; xl: number[]; yl: number[]; zl: number[] }) {
  const txt = { fontSize: 10, fontFamily: 'Liberation Sans, sans-serif' }
  return (
    <g>
      <line x1={ox} y1={oy} x2={xe[0]} y2={xe[1]} stroke="#ee1010" strokeWidth="2" />
      <path d={`M${xe[0] + 7} ${xe[1]} l-11 -3 v6 Z`} fill="#b81010" />
      <line x1={ox} y1={oy} x2={ye[0]} y2={ye[1]} stroke="#22dd22" strokeWidth="2" />
      <circle cx={ye[0]} cy={ye[1]} r="2.5" fill="#10a010" />
      <line x1={ox} y1={oy} x2={ze[0]} y2={ze[1]} stroke="#12f0f0" strokeWidth="2" />
      <path d={`M${ze[0] + 0.5} ${ze[1] + 7} l-3 -10 h6 Z`} fill="#109a9a" />
      <text x={xl[0]} y={xl[1]} fill="#e01010" textAnchor="middle" {...txt}>X</text>
      <text x={yl[0]} y={yl[1]} fill="#22cc22" textAnchor="middle" {...txt}>Y</text>
      <text x={zl[0]} y={zl[1]} fill="#12e0e0" textAnchor="middle" {...txt}>Z</text>
    </g>
  )
}

function Model() {
  const top = 'L 595 347 C 625 332, 655 320, 687 307 C 740 285, 790 270, 840 259 C 930 237, 1030 225, 1127 215'
  const topBack = 'C 1030 225, 930 237, 840 259 C 790 270, 740 285, 687 307 C 655 320, 625 332, 595 347 L 491 407'
  const bottomBack = 'C 1040 380, 990 392, 940 412 C 900 426, 860 445, 830 460 C 805 473, 780 488, 760 500 C 730 518, 705 538, 683 555 C 655 577, 630 603, 607 627 L 550 700 L 522 733'
  const inner = 'L 520 598 L 550 573 L 600 537 C 630 518, 655 498, 683 483 C 710 468, 735 456, 762 443 C 800 424, 840 412, 883 400 C 940 382, 1000 368, 1055 355'
  const reds = [[244, 389], [346, 556], [395, 713], [522, 733], [830, 460], [1102, 370], [1127, 215], [1039, 204], [715, 246], [840, 259], [491, 407]]
  return (
    <svg width="1362" height="828" viewBox="25 101 1362 828" className="block">
      <defs>
        <linearGradient id="side" x1="500" y1="0" x2="1120" y2="0" gradientUnits="userSpaceOnUse">
          <stop offset="0" stopColor="#5a5aea" />
          <stop offset="0.5" stopColor="#5656d8" />
          <stop offset="1" stopColor="#4e4ec8" />
        </linearGradient>
      </defs>
      <path d={`M491 407 ${top} L1102 370 ${bottomBack} Z`} fill="url(#side)" />
      <path d="M244 389 L491 407 L522 733 L395 713 C 385 665, 370 610, 346 556 C 315 500, 280 440, 244 389 Z" fill="#5757f6" />
      <path d={`M395 713 ${inner} L1102 370 ${bottomBack} Z`} fill="#3434b8" />
      <path d={`M244 389 L397 332 C 470 307, 560 280, 623 265 C 660 257, 690 250, 717 246 C 830 224, 940 212, 1039 204 L1127 215 ${topBack} Z`} fill="#3333a8" />

      {/* faint lines just inside the faces */}
      <g fill="none" stroke="#8080d4" strokeWidth="1">
        <path d="M345 415 C 375 480, 420 590, 440 680" strokeDasharray="12 3" />
        <path d="M1022 238 C 1032 290, 1030 330, 1026 362" />
        <path d="M520 588 L600 527 L687 470 L760 433 L853 400 C 920 378, 990 362, 1055 348" strokeDasharray="14 4" />
        <path d="M545 697 L607 622 L683 551 L760 495 L830 456 L940 409 C 990 392, 1040 380, 1090 372" strokeDasharray="9 4" />
      </g>
      <path d="M323 378 L440 330 L573 292 L720 257 C 850 232, 950 222, 1030 214" fill="none" stroke="#6666ba" strokeWidth="1" strokeDasharray="12 4" />

      {/* dashed inset outlines */}
      <g fill="none" stroke="#b0b0b0" strokeWidth="1.2" strokeDasharray="11 5">
        <path d="M258 398 L485 415 L520 727 L401 711 C 388 650, 370 600, 345 550 C 320 495, 290 445, 258 398" />
        <path d="M268 386 L487 402 L593 343 C 620 330, 655 315, 687 302 C 740 280, 790 265, 840 254 C 930 232, 1030 222, 1118 216 C 1090 213, 1060 210, 1039 208 C 940 216, 830 228, 717 250 L523 295 L400 335 L268 386" />
        <path d="M1097 227 C 1030 233, 950 245, 870 262 C 820 275, 760 292, 720 308 L600 362 L542 395" />
        <path d="M1097 227 L1075 368 C 1030 375, 985 388, 940 405 L830 452 L760 490 C 730 508, 705 528, 683 547 L607 617 L558 670 L538 398" />
      </g>

      {/* edges */}
      <g fill="none" stroke="#1a1a60" strokeWidth="1.2">
        <path d="M244 389 L491 407 L522 733" stroke="#08081e" strokeWidth="1.6" />
        <path d={`M491 407 ${top}`} stroke="#08081e" strokeWidth="1.6" />
        <path d="M244 389 C 280 440, 315 500, 346 556 C 370 610, 385 665, 395 713 L522 733" stroke="#20206a" />
        <path d={`M1102 370 ${bottomBack}`} stroke="#0a0a28" />
        <path d={`M395 713 ${inner} L1102 370`} stroke="#20206a" />
        <path d="M244 389 L397 332 C 470 307, 560 280, 623 265 C 660 257, 690 250, 717 246 C 830 224, 940 212, 1039 204" />
        <path d="M1039 204 C 1050 240, 1060 300, 1055 355" stroke="#181868" />
        <path d="M1127 215 L1102 370" stroke="#20206a" />
        <path d="M1039 204 L1127 215" stroke="#20206a" />
      </g>
      <rect x="1054" y="279" width="3" height="3" fill="#60148c" />
      <rect x="761" y="442" width="3" height="3" fill="#60148c" />
      {reds.map(([x, y]) => <rect key={x} x={x - 2} y={y - 2} width="4" height="4" fill="#e81010" />)}
      <circle cx="854" cy="361" r="2.5" fill="#e4e4dc" />
      <Axes ox={491} oy={407} xe={[518, 409]} ye={[479, 415]} ze={[495, 438]} xl={[538, 415]} yl={[469, 426]} zl={[496, 459]} />
      <Axes ox={80} oy={791} xe={[113, 794]} ye={[71, 806]} ze={[80, 822]} xl={[127, 798]} yl={[57, 809]} zl={[84, 843]} />
    </svg>
  )
}

export default function App() {
  return (
    <div className="flex h-screen w-screen flex-col overflow-hidden bg-[#cfd3dc] font-['Liberation_Sans',sans-serif] text-[11px] leading-none">
      {/* Title bar */}
      <div className="flex h-[23px] shrink-0 items-center gap-[3px] bg-white pl-[3px] font-['Open_Sans',sans-serif] text-[11.3px] text-[#111]">
        <svg width="17" height="17" viewBox="0 0 17 17">
          <path d="M3 6 9 2l7 3v7l-6 4-7-3Z" fill="#7a8ea8" stroke="#445a78" />
          <path d="M9 2v7l7-3M9 9l-6-3M9 9v7" stroke="#c4d0e0" fill="none" />
          <text x="1" y="16" fontSize="11" fontWeight="700" fill="#e0a820" fontFamily="Liberation Sans, sans-serif">5</text>
        </svg>
        <span>RFEM 5.22.01 x64 - [4463-model-file*]</span>
      </div>

      {/* Menu */}
      <div className="flex h-[24px] shrink-0 items-center pl-[5px] font-['Open_Sans',sans-serif] text-[10.9px] text-[#4b5364]">
        <div className="flex w-[5px] flex-col gap-[2px]">
          <div className="size-[2px] bg-[#9aa0ac]" />
          <div className="size-[2px] bg-[#9aa0ac]" />
          <div className="size-[2px] bg-[#9aa0ac]" />
          <div className="size-[2px] bg-[#9aa0ac]" />
        </div>
        <svg width="17" height="13" viewBox="0 0 17 13" className="mr-[9px]">
          <rect width="17" height="13" fill="#1b3467" />
          <path d="M0 8h17M8.5 1v12M2 8 8.5 2 15 8" stroke="#fff" strokeWidth="1.2" fill="none" />
        </svg>
        <div className="flex gap-[14.4px]">
          {MENU.map(([a, u, b]) => <span key={u + b}>{a}<span className="underline">{u}</span>{b}</span>)}
        </div>
      </div>

      {/* Toolbars */}
      <div className="flex h-[26px] shrink-0 items-start gap-px pl-[2px]">
        <Band toks={ROW1A} />
        <Band toks={ROW1B} />
        <Band toks={ROW1C} />
      </div>
      <div className="flex h-[26px] shrink-0 items-start gap-px pl-[2px]">
        <Band toks={ROW2A} />
        <Band toks={ROW2B} />
        <Band toks={ROW2C} />
      </div>
      <div className="h-[2px] shrink-0 bg-[#7f8082]" />

      <div className="flex min-h-0 flex-1">
        {/* Navigator tab */}
        <div className="w-[24px] shrink-0 pt-[2px]">
          <div className="flex h-[221px] w-[21px] items-center border-r border-b border-[#a8acb6] bg-linear-to-r from-[#fff6d4] to-[#fdd888] pt-[3px] pr-[1px] text-[12.3px] text-[#5c5c58] [writing-mode:vertical-rl]">
            Навигатор проектов - Изобразить
          </div>
        </div>

        <div className="flex min-w-0 flex-1 flex-col">
          {/* Model view */}
          <div className="min-h-0 flex-1 overflow-hidden border-l border-[#5a5a5a] bg-white">
            <Model />
          </div>

          {/* Table panel */}
          <div className="h-[192px] shrink-0">
            <div className="h-[6px] border-b border-[#e8eaf0]" />
            <div className="flex h-[18px] items-center bg-[#b9bec8] pl-[3px] text-[#444]">1.1 Узлы</div>
            <div className="flex h-[26px] items-center bg-linear-to-b from-[#eef1f8] to-[#d8dce6]">
              {ROW3.map((t, i) => <Tool key={i} tok={t} />)}
            </div>

            <div className="h-[115px] overflow-hidden border-t border-l-2 border-[#555] bg-[#f0f0f0] pt-[2px]">
              <div className="grid w-[1871px] grid-cols-[46px_84px_72px_90px_78px_78px_78px_1345px] grid-rows-[15px_16px_17px_16px_16px_16px_16px]">
                <div className="row-span-3 flex flex-col items-center gap-[2px] border-r border-b border-[#8a8a8a] bg-[#f0f0f0] pt-[16px] text-[#222]">
                  <span>Узел</span>
                  <span>№</span>
                </div>
                <div className={letterCell}>A</div>
                <div className="flex items-center justify-center border-r-2 border-b-2 border-[#7c7c7c] bg-[#3399ff] pt-[2px] text-[#123]">B</div>
                <div className={letterCell}>C</div>
                <div className={letterCell}>D</div>
                <div className={letterCell}>E</div>
                <div className={letterCell}>F</div>
                <div className={letterCell}>G</div>

                <div className={`row-span-2 ${headCell}`}>Тип узла</div>
                <div className="row-span-2 flex flex-col items-center gap-[5px] border-r border-b border-[#a4a4a4] bg-[#f0f0f0] pt-[2px] text-[#222]">
                  <span>Узел-</span>
                  <span>ориентир</span>
                </div>
                <div className="row-span-2 flex flex-col items-center gap-[5px] border-r border-b border-[#a4a4a4] bg-[#f0f0f0] pt-[2px] text-[#222]">
                  <span>Система</span>
                  <span>координат</span>
                </div>
                <div className="col-span-3 flex items-center justify-center border-r border-[#a4a4a4] bg-[#f0f0f0] text-[#222]">Координаты узла</div>
                <div className={`row-span-2 ${headCell}`}>Комментарий</div>
                <div className={headCell}>X [м]</div>
                <div className={headCell}>Y [м]</div>
                <div className={headCell}>Z [м]</div>

                {NODES.map((n, i) => (
                  <div key={i} className="contents">
                    <div className={`mx-px mb-px flex items-center justify-center border-r-2 border-b-2 border-[#7c7c7c] pt-[1px] text-[11.5px] ${i === 0 ? 'bg-[#3399ff] text-white' : 'bg-[#e4e4e4] text-[#222]'}`}>{i + 1}</div>
                    <div className={`${cell} pl-[3px]`}>Стандартный</div>
                    <div className={`${cell} justify-center ${i === 0 ? 'outline-1 -outline-offset-1 outline-dotted outline-black' : ''}`}>0</div>
                    <div className={`${cell} pl-[4px]`}><span><span className="underline">Д</span>екартова</span></div>
                    {n.map((v, j) => <div key={j} className={`${cell} justify-end pr-[3px]`}>{v}</div>)}
                    <div className={cell} />
                  </div>
                ))}
              </div>
            </div>

            {/* Sheet tabs */}
            <div className="h-[8px] bg-[#f0f0f0]" />
            <div className="flex h-[17px] border-t border-[#9a9a9a] bg-[#ececec] pl-px">
              <div className="relative -mt-px flex h-[18px] w-[36px] items-center justify-center border-r border-[#8a8a8a] bg-white pr-[2px] pt-[2px] text-[#222]">Узлы</div>
              {TABS.map(([t, w]) => (
                <div key={t} className={`relative flex shrink-0 items-center justify-center border-r border-[#8a8a8a] pt-[1px] text-[#222] ${w}`}>
                  {t}
                  <svg width="7" height="4" className="absolute right-[-4px] bottom-0"><path d="M0 4 3.5 0 7 4Z" fill="#fff" stroke="#8a8a8a" strokeWidth=".7" /></svg>
                </div>
              ))}
            </div>
            <div className="h-[2px] border-t border-[#8a8a8a] bg-[#cfd3dc]" />
          </div>
        </div>
      </div>
    </div>
  )
}
